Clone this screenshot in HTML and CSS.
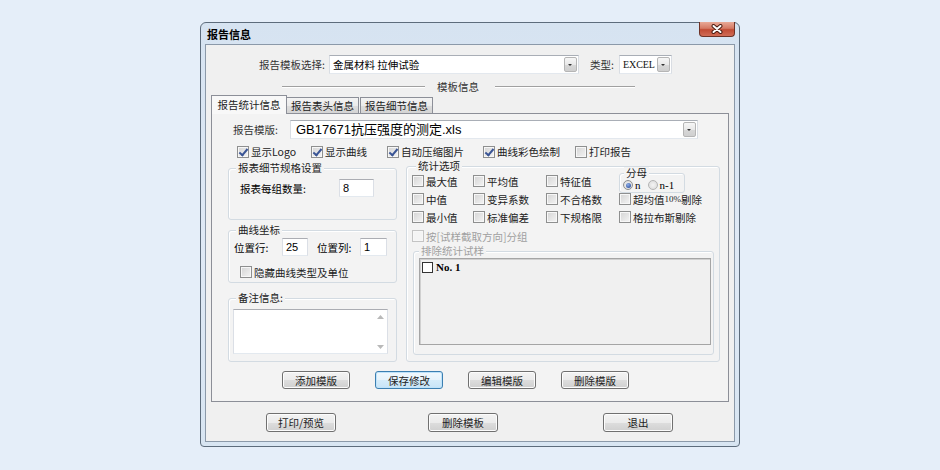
FILE: index.html
```html
<!DOCTYPE html>
<html lang="zh-CN">
<head>
<meta charset="utf-8">
<title>报告信息</title>
<link rel="stylesheet" href="styles.css">
</head>
<body>
<div class="desktop">
  <div class="window">
    <div class="titlebar">
      <span class="title">报告信息</span>
      <div class="close">
        <svg width="14" height="10" viewBox="0 0 14 10"><path d="M3.5 2 L10.5 8 M10.5 2 L3.5 8" stroke="#4a1c12" stroke-width="4" stroke-linecap="round"/><path d="M3.5 2 L10.5 8 M10.5 2 L3.5 8" stroke="#fff" stroke-width="2" stroke-linecap="round"/></svg>
      </div>
    </div>
    <div class="client">
      <div class="row-top">
        <span class="lbl lbl-tpl">报告模板选择:</span>
        <div class="combo combo-tpl"><span class="combo-text">金属材料 拉伸试验</span><span class="dd"></span></div>
        <span class="lbl lbl-type">类型:</span>
        <div class="combo combo-type"><span class="combo-text serif">EXCEL</span><span class="dd"></span></div>
      </div>
      <div class="sep-row">
        <span class="etch etch-l"></span>
        <span class="sep-text">模板信息</span>
        <span class="etch etch-r"></span>
      </div>
      <div class="tabs">
        <div class="tab tab1 active">报告统计信息</div>
        <div class="tab tab2">报告表头信息</div>
        <div class="tab tab3">报告细节信息</div>
      </div>
      <div class="panel">
        <div class="row-file">
          <span class="lbl lbl-file">报告模版:</span>
          <div class="combo combo-file"><span class="combo-text file-text">GB17671抗压强度的测定.xls</span><span class="dd"></span></div>
        </div>
        <div class="row-checks">
          <label class="chk c1"><span class="cb on"></span>显示Logo</label>
          <label class="chk c2"><span class="cb on"></span>显示曲线</label>
          <label class="chk c3"><span class="cb on"></span>自动压缩图片</label>
          <label class="chk c4"><span class="cb on"></span>曲线彩色绘制</label>
          <label class="chk c5"><span class="cb"></span>打印报告</label>
        </div>
        <div class="cols">
          <div class="col-left">
            <div class="group g1">
              <span class="gt">报表细节规格设置</span>
              <div class="g1-body">
                <span class="g1-lbl">报表每组数量:</span>
                <span class="edit e-count">8</span>
              </div>
            </div>
            <div class="group g2">
              <span class="gt">曲线坐标</span>
              <div class="g2-row">
                <span class="g2-lbl">位置行:</span>
                <span class="edit e-row">25</span>
                <span class="g2-lbl g2-lbl2">位置列:</span>
                <span class="edit e-col">1</span>
              </div>
              <label class="chk g2-chk"><span class="cb"></span>隐藏曲线类型及单位</label>
            </div>
            <div class="group g3">
              <span class="gt">备注信息:</span>
              <div class="memo">
                <div class="memo-sb">
                  <svg width="7" height="4" viewBox="0 0 7 4"><path d="M0 4 L3.5 0 L7 4Z" fill="#b9b9b9"/></svg>
                  <svg width="7" height="4" viewBox="0 0 7 4"><path d="M0 0 L3.5 4 L7 0Z" fill="#b9b9b9"/></svg>
                </div>
              </div>
            </div>
          </div>
          <div class="group col-right">
            <span class="gt">统计选项</span>
            <div class="stat-grid">
              <label class="chk"><span class="cb"></span>最大值</label>
              <label class="chk"><span class="cb"></span>平均值</label>
              <label class="chk"><span class="cb"></span>特征值</label>
              <div class="group denom">
                <span class="gt gt-denom">分母</span>
                <div class="radios">
                  <span class="rb on"></span><span class="serif rt">n</span>
                  <span class="rb rb2"></span><span class="serif rt">n-1</span>
                </div>
              </div>
              <label class="chk"><span class="cb"></span>中值</label>
              <label class="chk"><span class="cb"></span>变异系数</label>
              <label class="chk"><span class="cb"></span>不合格数</label>
              <label class="chk"><span class="cb"></span>超均值<span class="small">10%</span>剔除</label>
              <label class="chk"><span class="cb"></span>最小值</label>
              <label class="chk"><span class="cb"></span>标准偏差</label>
              <label class="chk"><span class="cb"></span>下规格限</label>
              <label class="chk"><span class="cb"></span>格拉布斯剔除</label>
            </div>
            <label class="chk disabled dis-row"><span class="cb dis"></span>按[试样截取方向]分组</label>
            <div class="group excl">
              <span class="gt gt-dis">排除统计试样</span>
              <div class="listbox">
                <div class="li"><span class="libox"></span><span class="serif li-text">No. 1</span></div>
              </div>
            </div>
          </div>
        </div>
        <div class="row-btns">
          <button class="btn">添加模版</button>
          <button class="btn focus">保存修改</button>
          <button class="btn">编辑模版</button>
          <button class="btn">删除模版</button>
        </div>
      </div>
      <div class="row-bottom">
        <button class="btn">打印/预览</button>
        <button class="btn">删除模板</button>
        <button class="btn btn-exit">退出</button>
      </div>
    </div>
  </div>
</div>
</body>
</html>
```
FILE: styles.css
```css
* { box-sizing: border-box; }
html, body { margin: 0; height: 100%; }
body {
  background: #e5eef9;
  font-family: "Noto Sans CJK SC", "Noto Sans CJK JP", sans-serif;
  font-size: 10.5px;
  line-height: 13px;
  color: #000;
}
.serif { font-family: "Liberation Serif", "Noto Sans CJK SC", serif; }
.desktop { padding: 22px 0 0 200px; }

.window {
  width: 540px;
  height: 425px;
  border: 1px solid #5d6c7c;
  border-radius: 6px 6px 4px 4px;
  background: linear-gradient(#d6e3f1, #dfe9f5 50%, #d8e5f2);
  padding: 0 4px 4px;
  display: flex;
  flex-direction: column;
}
.titlebar {
  flex: none;
  height: 21px;
  display: flex;
  justify-content: space-between;
  align-items: flex-start;
}
.title { margin: 5px 0 0 2px; font-weight: bold; font-size: 11px; line-height: 12px; }
.close {
  width: 36px;
  height: 15px;
  margin-top: -1px;
  border: 1px solid #6e3226;
  border-top: none;
  border-radius: 0 0 4px 4px;
  background: linear-gradient(#e9aa98, #d57a65 45%, #c14b34 55%, #d06c56);
  display: flex;
  align-items: center;
  justify-content: center;
}
.client {
  flex: 1;
  border: 1px solid #8b99a9;
  background: #f0f0f0;
  display: flex;
  flex-direction: column;
}

/* top row */
.row-top { display: flex; align-items: center; height: 19px; margin-top: 10px; }
.lbl { color: #333; white-space: nowrap; }
.lbl-tpl { width: 119px; text-align: right; margin-right: 4px; }
.lbl-type { margin-left: 11px; width: 26px; margin-right: 3px; }
.combo {
  height: 19px;
  background: #fff;
  border: 1px solid #a9aeb6;
  border-color: #a9aeb6 #d9dde3 #e3e8ee #d9dde3;
  display: flex;
  align-items: center;
  justify-content: space-between;
  padding: 0 1px 0 3px;
}
.combo-text { white-space: nowrap; }
.combo-tpl { width: 250px; }
.combo-type { width: 53px; padding-left: 3px; }
.combo-type .combo-text { font-size: 10px; letter-spacing: -0.1px; color: #111; }
.dd {
  flex: none;
  width: 13px;
  height: 15px;
  border: 1px solid #b5b5b5;
  border-radius: 2px;
  background: linear-gradient(#f6f6f6, #e9e9e9 50%, #d8d8d8 51%, #cfcfcf);
  position: relative;
}
.dd::after {
  content: "";
  position: absolute;
  left: 3px;
  top: 6px;
  border-left: 2.5px solid transparent;
  border-right: 2.5px solid transparent;
  border-top: 2px solid #333;
}

/* separator */
.sep-row { display: flex; align-items: center; height: 13px; margin-top: 6px; padding-left: 76px; }
.etch { height: 2px; border-top: 1px solid #a0a0a0; border-bottom: 1px solid #fff; }
.etch-l { width: 143px; }
.etch-r { width: 140px; }
.sep-text { margin: 0 16px 0 12px; color: #333; }

/* tabs */
.tabs { display: flex; align-items: flex-end; height: 18px; margin-top: 2px; margin-left: 5px; position: relative; z-index: 1; }
.tab {
  height: 16px;
  border: 1px solid #8c8f98;
  border-bottom: none;
  background: linear-gradient(#f3f3f3, #ebebeb 50%, #dedede 51%, #d4d4d4);
  text-align: center;
  line-height: 15px;
  color: #222;
}
.tab1 { width: 76px; }
.tab2 { width: 73px; margin-left: -1px; }
.tab3 { width: 73px; margin-left: 1px; }
.tab.active {
  height: 19px;
  margin-bottom: -1px;
  background: #f8f8f8;
  line-height: 18px;
}

/* panel */
.panel {
  width: 518px;
  height: 289px;
  margin-left: 5px;
  border: 1px solid #8c8f98;
  background: #f3f3f3;
  display: flex;
  flex-direction: column;
}
.row-file { display: flex; align-items: center; height: 19px; margin-top: 6px; padding-left: 21px; }
.lbl-file { width: 57px; }
.combo-file { width: 408px; }
.file-text { font-family: "Liberation Sans", "Noto Sans CJK SC", sans-serif; font-size: 13px; padding-left: 2px; }

.row-checks { display: flex; height: 13px; margin-top: 6px; padding-left: 25px; align-items: center; }
.chk { display: flex; align-items: center; white-space: nowrap; color: #222; }
.c1 { width: 74px; }
.c2 { width: 76px; }
.c3 { width: 96px; }
.c4 { width: 92px; }
.cb {
  flex: none;
  width: 12px;
  height: 12px;
  margin-right: 2px;
  border: 1px solid #8e8f8f;
  background: linear-gradient(135deg, #d4d4d4, #f4f4f4);
  box-shadow: inset 0 0 0 1px #f7f7f7;
  position: relative;
}
.cb.on::after {
  content: "";
  position: absolute;
  left: 3px;
  top: 0px;
  width: 3px;
  height: 7px;
  border-right: 2px solid #3a5595;
  border-bottom: 2px solid #3a5595;
  transform: rotate(40deg);
}
.cb.dis { border-color: #c4c4c4; background: #f4f4f4; }
.disabled { color: #a0a0a0; }

/* columns */
.cols { display: flex; align-items: flex-start; margin-top: 2px; }
.col-left { display: flex; flex-direction: column; width: 169px; margin-left: 16px; }
.group {
  border: 1px solid #d3dbe2;
  border-radius: 3px;
  box-shadow: inset 1px 1px 0 #fff;
}
.gt {
  display: table;
  line-height: 14px;
  margin-top: -8px;
  padding: 0 2px;
  background: #f3f3f3;
  color: #222;
}
.g1 { height: 52px; margin-top: 8px; }
.g1 .gt { margin-left: 7px; }
.g1-body { display: flex; align-items: center; margin-top: 4px; padding-left: 11px; }
.g1-lbl { width: 99px; }
.edit {
  height: 18px;
  background: #fff;
  border: 1px solid #abadb3;
  border-color: #abadb3 #dbdfe6 #e3e9ef #dbdfe6;
  font-family: "Liberation Sans", sans-serif;
  font-size: 11px;
  line-height: 16px;
  padding-left: 3px;
}
.e-count { width: 35px; }
.g2 { height: 53px; margin-top: 10px; }
.g2 .gt { margin-left: 7px; }
.g2-row { display: flex; align-items: center; margin-top: 1px; padding-left: 5px; }
.g2-lbl { width: 48px; }
.g2-lbl2 { width: 43px; margin-left: 9px; }
.e-row { width: 26px; }
.e-col { width: 27px; }
.g2-chk { margin: 10px 0 0 11px; height: 12px; }
.g3 { height: 64px; margin-top: 15px; }
.g3 .gt { margin-left: 7px; }
.memo {
  width: 155px;
  height: 45px;
  margin: 4px 0 0 4px;
  background: #fff;
  border: 1px solid #abadb3;
  border-color: #abadb3 #dbdfe6 #e3e9ef #dbdfe6;
  display: flex;
  justify-content: flex-end;
}
.memo-sb {
  width: 13px;
  display: flex;
  flex-direction: column;
  justify-content: space-between;
  align-items: center;
  padding: 5px 0 4px;
}

/* right column */
.col-right { width: 314px; height: 196px; margin: 6px 0 0 9px; }
.col-right > .gt { margin-left: 9px; }
.stat-grid {
  display: grid;
  grid-template-columns: 61px 73px 73px 1fr;
  grid-auto-rows: 18px;
  align-items: center;
  margin-top: -1px;
  padding-left: 5px;
}
.small { font-family: "Liberation Serif", serif; font-size: 9px; }
.denom {
  align-self: start;
  width: 66px;
  height: 20px;
  margin-top: 1px;
}
.gt-denom { margin-left: 4px; line-height: 12px; margin-top: -7px; }
.radios { display: flex; align-items: center; padding-left: 3px; height: 12px; }
.rb {
  width: 10px;
  height: 10px;
  border-radius: 50%;
  border: 1px solid #8e8f8f;
  background: radial-gradient(circle, #f4f4f4, #d8d8d8);
  margin-right: 2px;
  position: relative;
}
.rb.on::after {
  content: "";
  position: absolute;
  left: 1.5px;
  top: 1.5px;
  width: 5px;
  height: 5px;
  border-radius: 50%;
  background: radial-gradient(circle at 40% 35%, #8fb0e8, #1c3f93);
}
.rb2 { margin-left: 7px; border-color: #b4b4b4; }
.rt { font-size: 11px; }
.dis-row { margin: 4px 0 0 5px; height: 12px; }
.excl { width: 301px; height: 104px; margin: 9px 0 0 6px; }
.gt-dis { margin-left: 5px; color: #a0a0a0; }
.listbox {
  width: 292px;
  height: 87px;
  margin-left: 5px;
  border: 1px solid #a5a5a5;
  box-shadow: inset 1px 1px 0 #d0d0d0;
  background: #f0f0f0;
  padding: 2px 0 0 2px;
}
.li { display: flex; align-items: center; }
.libox {
  width: 11px;
  height: 11px;
  border: 1px solid #333;
  background: #fff;
  margin-right: 3px;
}
.li-text { font-weight: bold; font-size: 11px; }

/* buttons */
.btn {
  width: 68px;
  height: 18px;
  padding: 0;
  border: 1px solid #707070;
  border-radius: 3px;
  background: linear-gradient(#f3f3f3, #ebebeb 50%, #dddddd 51%, #d0d0d0);
  box-shadow: inset 0 0 0 1px #fcfcfc;
  font: inherit;
  color: #222;
  line-height: 15px;
}
.btn.focus {
  border-color: #3c7fb1;
  background: linear-gradient(#f1f8fd, #e6f3fb 50%, #d5ecfa 51%, #c7e4f7);
  box-shadow: inset 0 0 0 1px #bfe3fa;
}
.row-btns { display: flex; gap: 25px; margin-top: 9px; padding-left: 70px; }
.row-bottom { display: flex; gap: 92px; margin-top: 11px; padding-left: 60px; }
.row-bottom .btn { width: 70px; height: 19px; }
.row-bottom .btn-exit { margin-left: 13px; }
```
